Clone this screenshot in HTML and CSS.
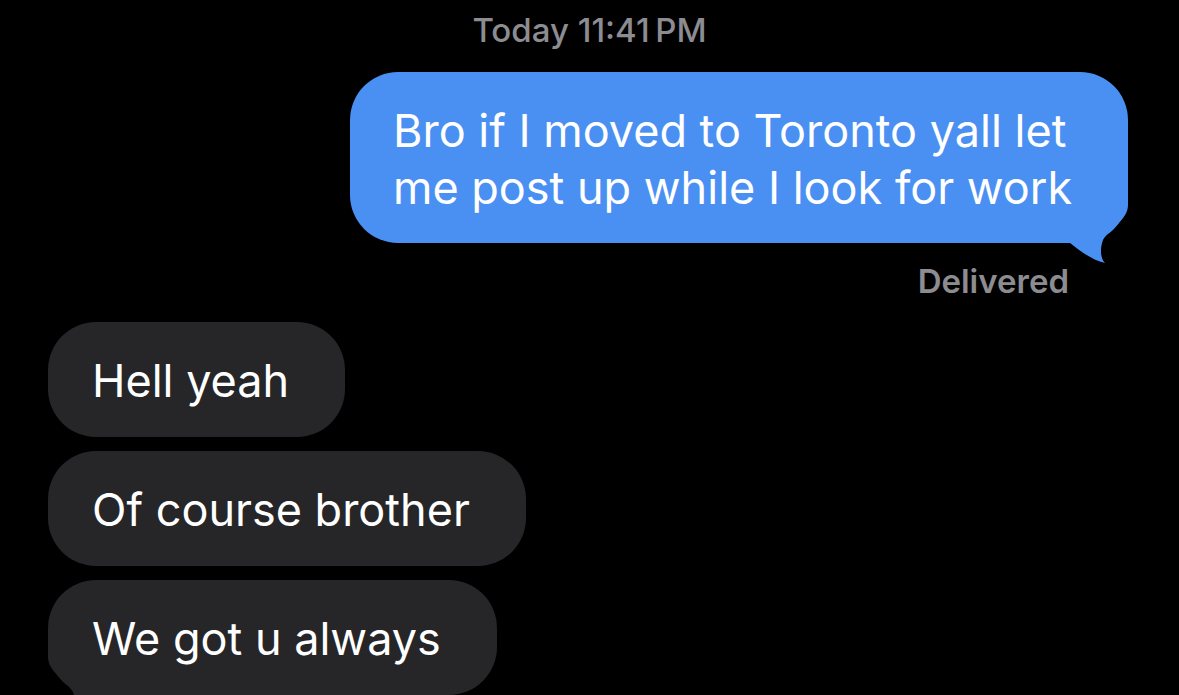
FILE: index.html
```html
<!DOCTYPE html>
<html lang="en">
<head>
<meta charset="utf-8">
<title>Messages</title>
<link rel="stylesheet" href="styles.css">
</head>
<body>
<main class="thread">
  <div class="stamp"><span class="stamp-day">Today</span> 11:41&#8201;PM</div>

  <div class="msg msg-out">
    <div class="bubble bubble-out">
      <svg class="tail tail-out" viewBox="0 0 70 75" width="70" height="75" aria-hidden="true">
        <path d="M70 0 L70 15 C70 30 52 38 45 50 C42 58 42 68 47 73 C34 70 22 61 12 53 L0 53 L0 0 Z"/>
      </svg>
      <span class="text">Bro if I moved to Toronto yall let me post up while I look for work</span>
    </div>
  </div>
  <div class="status">Delivered</div>

  <div class="msg msg-in">
    <div class="bubble bubble-in"><span class="text">Hell yeah</span></div>
  </div>
  <div class="msg msg-in">
    <div class="bubble bubble-in"><span class="text">Of course brother</span></div>
  </div>
  <div class="msg msg-in">
    <div class="bubble bubble-in">
      <svg class="tail tail-in" viewBox="0 0 70 75" width="70" height="75" aria-hidden="true">
        <path d="M0 0 L0 15 C0 30 18 38 25 50 C28 58 28 68 23 73 C36 70 48 61 58 53 L70 53 L70 0 Z"/>
      </svg>
      <span class="text">We got u always</span>
    </div>
  </div>
</main>
</body>
</html>
```

FILE: styles.css
```css
html, body {
  margin: 0;
  padding: 0;
  background: #000;
  overflow: hidden;
  height: 695px;
}

body {
  font-family: Inter, "Noto Sans", "Liberation Sans", sans-serif;
  color: #fff;
}

.thread {
  display: flex;
  flex-direction: column;
}

.stamp {
  text-align: center;
  color: #8c8c91;
  font-size: 33px;
  line-height: 40px;
  padding-top: 10px;
  font-weight: 500;
}

.msg {
  display: flex;
}

.msg-out {
  justify-content: flex-end;
  padding-right: 51px;
  margin-top: 22px;
}

.msg-in {
  justify-content: flex-start;
  padding-left: 48px;
  margin-top: 14px;
}

.bubble {
  position: relative;
  font-size: 45px;
  line-height: 57px;
  padding: 30px 50px 27px 43px;
  border-radius: 48px;
}

.text {
  position: relative;
  z-index: 1;
}

.bubble-out {
  background: #4a90f3;
  max-width: 685px;
}

.bubble-in {
  background: #262629;
  padding: 30px 56px 28px 44px;
}

.tail {
  position: absolute;
  bottom: -22px;
  z-index: 0;
}

.tail-out {
  right: 0;
  fill: #4a90f3;
}

.tail-in {
  left: 0;
  fill: #262629;
}

.status {
  align-self: flex-end;
  margin-right: 110px;
  margin-top: 19px;
  margin-bottom: 8px;
  color: #8c8c91;
  font-size: 33px;
  line-height: 38px;
  font-weight: 600;
}
```
